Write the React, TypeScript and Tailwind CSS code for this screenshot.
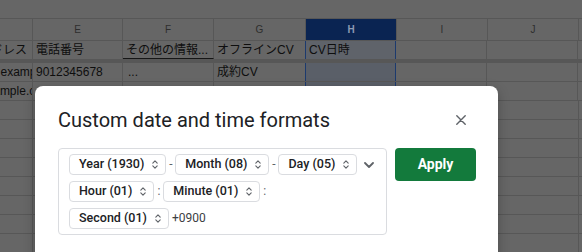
import React from "react";

const COLS = [33, 90, 91, 92, 91, 91, 91, 40];
const LETTERS = ["", "E", "F", "G", "H", "I", "J", ""];

function UpDown() {
  return (
    <svg width="6" height="11" viewBox="0 0 6 11" fill="none" stroke="#5f6368" strokeWidth="1.1" strokeLinecap="round" strokeLinejoin="round">
      <path d="M0.8 4.2L3 1.8L5.2 4.2" />
      <path d="M0.8 6.8L3 9.2L5.2 6.8" />
    </svg>
  );
}

function Chip({ label }: { label: string }) {
  return (
    <div className="h-[21px] flex items-center gap-[8px] pl-[9px] pr-[7px] border border-[#dadce0] rounded-[4px] text-[12.5px] font-medium text-[#202124] whitespace-nowrap">
      <span>{label}</span>
      <UpDown />
    </div>
  );
}

function Sep({ c }: { c: string }) {
  return <span className="w-[9px] text-center text-[12px] leading-[21px] text-[#5f6368]">{c}</span>;
}

function Cell({ i, children, className = "" }: { i: number; children?: React.ReactNode; className?: string }) {
  return (
    <div
      className={`shrink-0 h-full border-r border-[#575757] overflow-hidden flex items-center ${className}`}
      style={{ width: COLS[i] }}
    >
      {children}
    </div>
  );
}

export default function App() {
  const emptyRows = Array.from({ length: 8 });
  return (
    <div className="relative w-[582px] h-[252px] overflow-hidden bg-[#666666] font-['Liberation_Sans','Noto_Sans_CJK_JP',sans-serif] text-[12px] text-[#0e0e0e]">
      <div className="h-[19px] border-b border-[#575757]" />
      {/* column letters */}
      <div className="h-[22px] flex border-b border-[#575757]">
        {LETTERS.map((l, i) => (
          <Cell
            key={i}
            i={i}
            className={`justify-center text-[10px] ${i === 4 ? "bg-[#0a2452] text-[#8d9ab2] font-bold" : "text-[#2e2e2e]"}`}
          >
            {l}
          </Cell>
        ))}
      </div>
      {/* row 1 */}
      <div className="h-[18px] flex">
        <Cell i={0} className="justify-end pr-[5px]">
          <span className="whitespace-nowrap">メールアドレス</span>
        </Cell>
        <Cell i={1} className="pl-[3px]">電話番号</Cell>
        <Cell i={2} className="pl-[3px] border-b border-b-[#161616]">その他の情報...</Cell>
        <Cell i={3} className="pl-[3px]">オフラインCV</Cell>
        <Cell i={4} className="pl-[3px] bg-[#5f636a] border-l border-l-[#1c3a6e] border-r-[#1c3a6e] -ml-px">CV日時</Cell>
        <Cell i={5} />
        <Cell i={6} />
        <Cell i={7} />
      </div>
      <div className="h-[4px] bg-[#575757]" />
      {/* row 2 */}
      <div className="h-[19px] flex border-b border-[#575757]">
        <Cell i={0}>
          <span className="whitespace-nowrap -ml-[31px]">test@example.com</span>
        </Cell>
        <Cell i={1} className="pl-[3px]">9012345678</Cell>
        <Cell i={2} className="pl-[5px]">...</Cell>
        <Cell i={3} className="pl-[3px]">成約CV</Cell>
        <Cell i={4} className="bg-[#5a5f68] border-l border-l-[#1c3a6e] border-r-[#1c3a6e] -ml-px" />
        <Cell i={5} />
        <Cell i={6} />
        <Cell i={7} />
      </div>
      {/* row 3 */}
      <div className="h-[19px] flex border-b border-[#575757]">
        <Cell i={0}>
          <span className="whitespace-nowrap -ml-[51px]">info@example.com</span>
        </Cell>
        <Cell i={1} />
        <Cell i={2} />
        <Cell i={3} />
        <Cell i={4} className="bg-[#5a5f68] border-l border-l-[#1c3a6e] border-r-[#1c3a6e] -ml-px" />
        <Cell i={5} />
        <Cell i={6} />
        <Cell i={7} />
      </div>
      {emptyRows.map((_, r) => (
        <div key={r} className="h-[19px] flex border-b border-[#575757]">
          {COLS.map((_, i) => (
            <Cell key={i} i={i} />
          ))}
        </div>
      ))}

      {/* dialog */}
      <div className="absolute left-[35px] top-[86px] w-[463px] h-[200px] bg-white rounded-[8px] shadow-[0_4px_12px_rgba(0,0,0,0.25)] pl-[23px] pr-[22px] pt-[19px] font-['Roboto',sans-serif]">
        <div className="h-[30px] flex items-center justify-between">
          <div className="text-[20px] leading-[24px] text-[#202124]">Custom date and time formats</div>
          <div className="w-[30px] h-[30px] flex items-center justify-center">
            <svg width="10" height="10" viewBox="0 0 10 10" stroke="#5f6368" strokeWidth="1.4" strokeLinecap="round">
              <path d="M0.8 0.8L9.2 9.2M9.2 0.8L0.8 9.2" />
            </svg>
          </div>
        </div>
        <div className="mt-[13px] flex items-start gap-[8px]">
          <div className="flex-1 flex items-start border border-[#dadce0] rounded-[4px] pl-[10px] pt-[5px] pb-[5px]">
            <div className="w-[295px] flex flex-wrap items-center gap-y-[6px]">
              <Chip label="Year (1930)" />
              <Sep c="-" />
              <Chip label="Month (08)" />
              <Sep c="-" />
              <Chip label="Day (05)" />
              <Chip label="Hour (01)" />
              <Sep c=":" />
              <Chip label="Minute (01)" />
              <Sep c=":" />
              <Chip label="Second (01)" />
              <span className="ml-[3px] text-[12px] leading-[21px] text-[#3c4043]">+0900</span>
            </div>
            <div className="w-[10px] h-[21px] flex items-center justify-center">
              <svg width="10" height="6" viewBox="0 0 10 6" fill="none" stroke="#5f6368" strokeWidth="1.8" strokeLinecap="round" strokeLinejoin="round">
                <path d="M1 1L5 5L9 1" />
              </svg>
            </div>
          </div>
          <button className="w-[81px] h-[33px] rounded-[4px] bg-[#137a3c] text-white text-[14px] font-bold flex items-center justify-center">
            Apply
          </button>
        </div>
      </div>
    </div>
  );
}
